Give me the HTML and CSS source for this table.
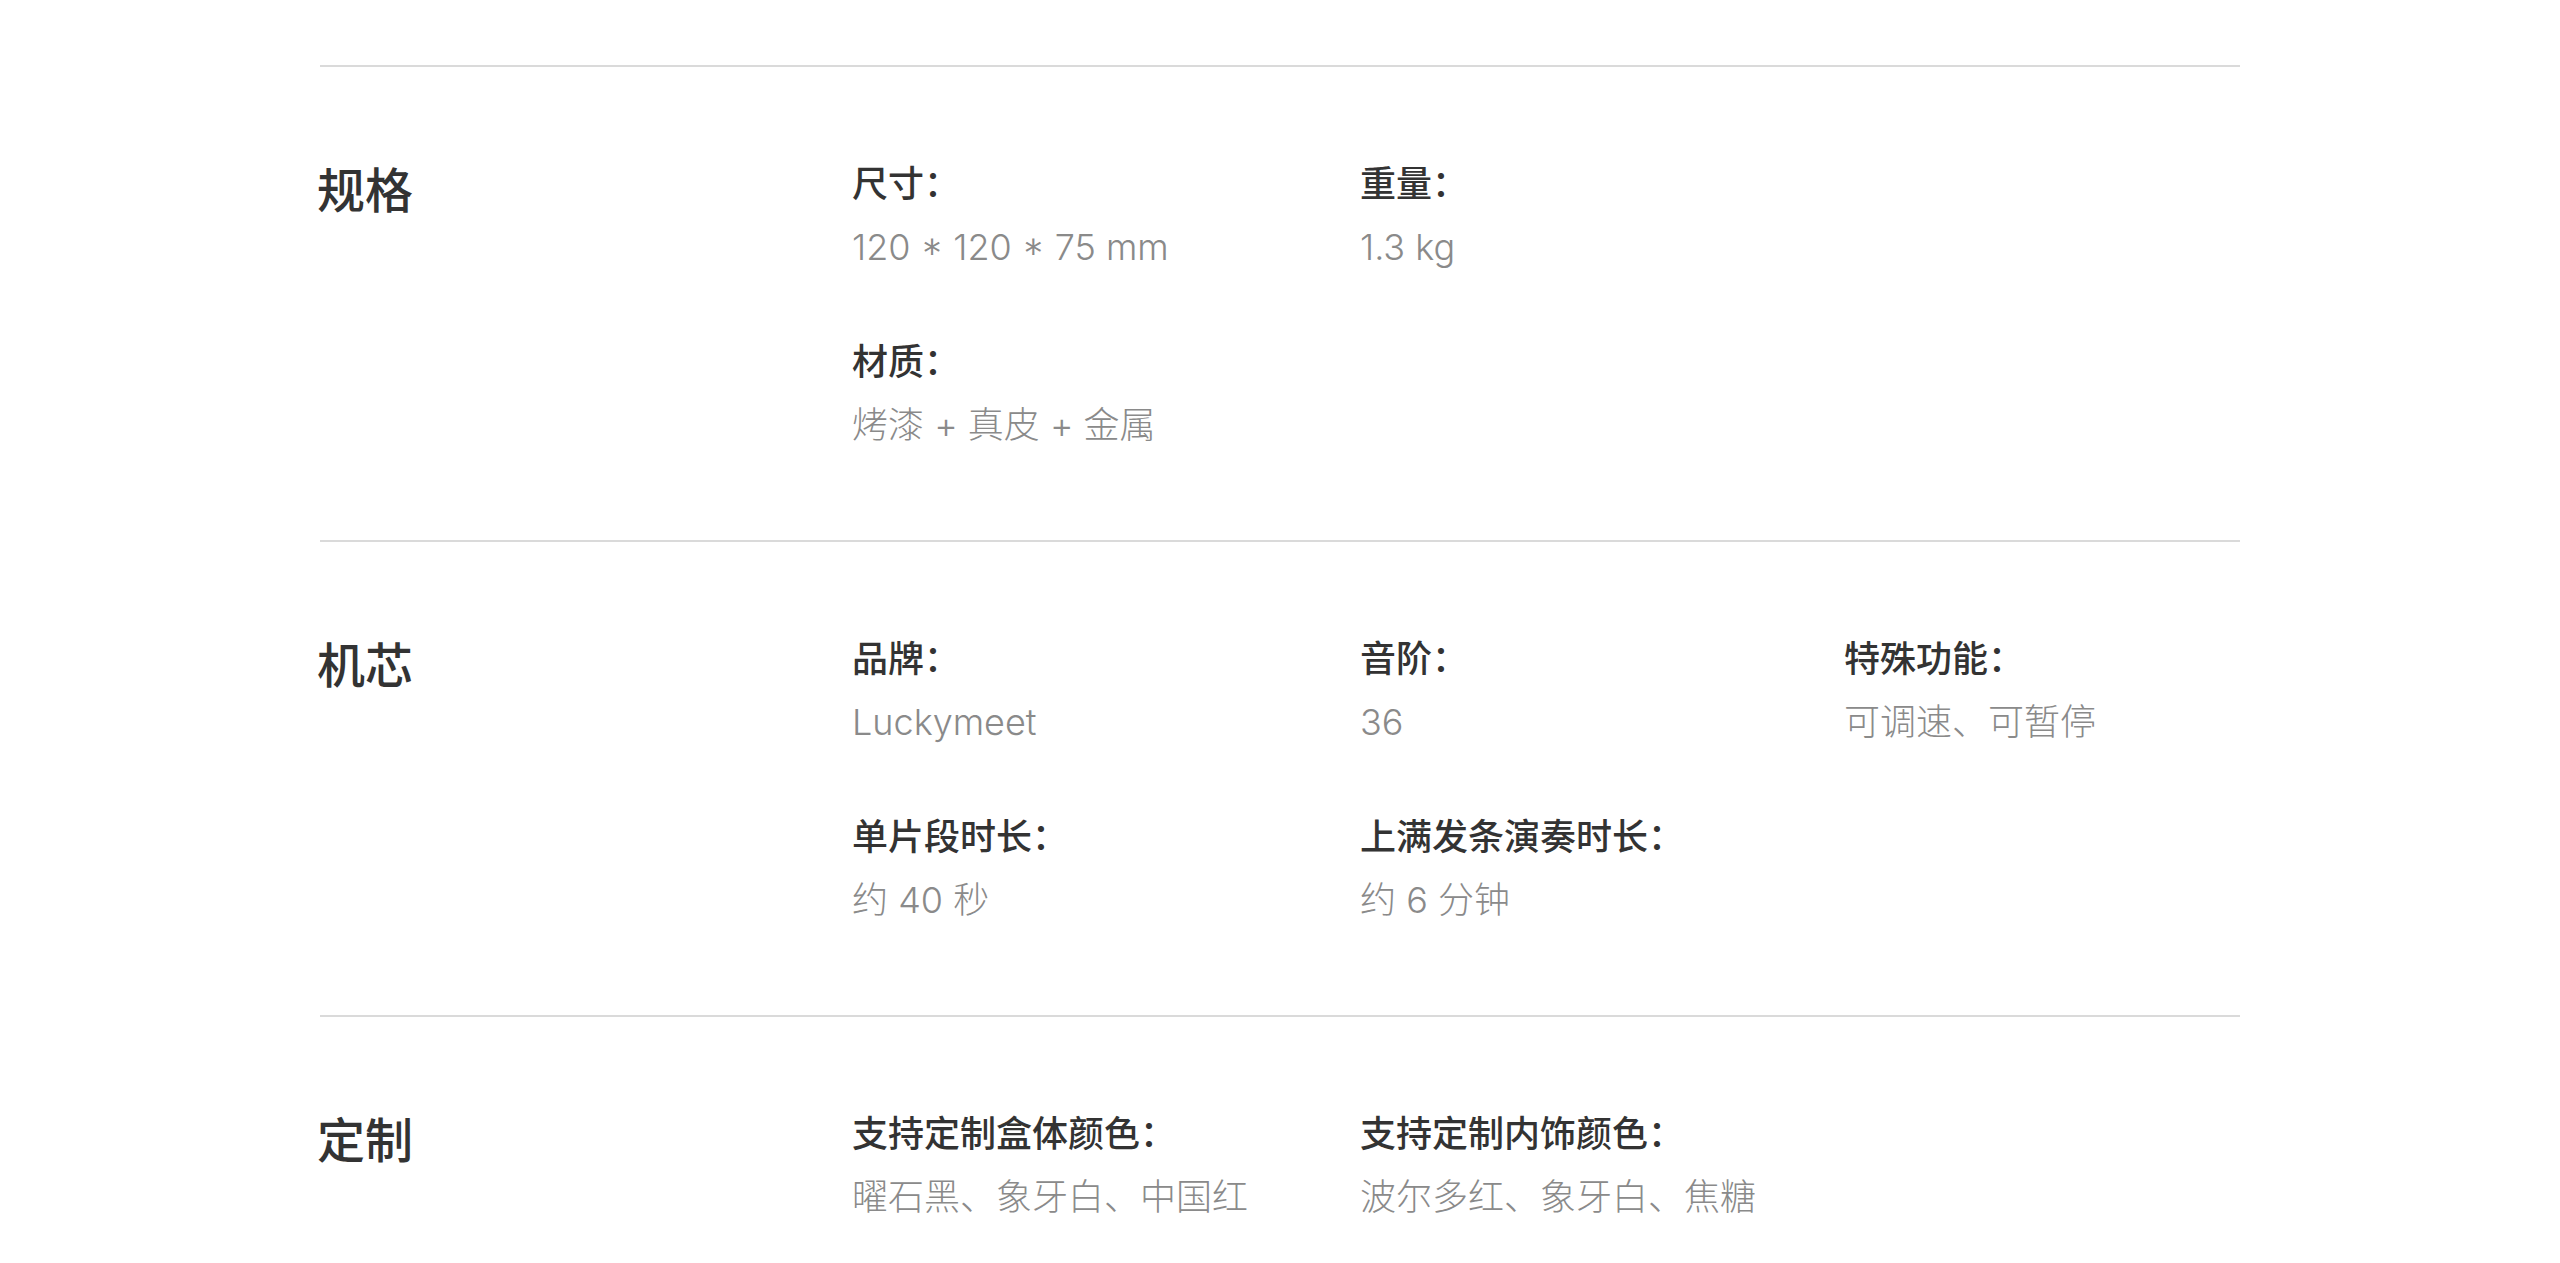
FILE: index.html
```html
<!DOCTYPE html>
<html lang="zh-CN">
<head>
    <meta charset="UTF-8">
    <meta name="viewport" content="width=device-width, initial-scale=1.0">
    <title>产品参数</title>
    <link rel="stylesheet" href="styles.css">
</head>
<body>
    <div class="specs">
        <section class="spec-section">
            <h2 class="spec-title">规格</h2>
            <div class="spec-list">
                <div class="spec-item">
                    <div class="spec-label">尺寸：</div>
                    <div class="spec-value">120 * 120 * 75 mm</div>
                </div>
                <div class="spec-item">
                    <div class="spec-label">重量：</div>
                    <div class="spec-value">1.3 kg</div>
                </div>
                <div class="spec-item spec-item-new-row">
                    <div class="spec-label">材质：</div>
                    <div class="spec-value">烤漆 + 真皮 + 金属</div>
                </div>
            </div>
        </section>

        <section class="spec-section">
            <h2 class="spec-title">机芯</h2>
            <div class="spec-list">
                <div class="spec-item">
                    <div class="spec-label">品牌：</div>
                    <div class="spec-value">Luckymeet</div>
                </div>
                <div class="spec-item">
                    <div class="spec-label">音阶：</div>
                    <div class="spec-value">36</div>
                </div>
                <div class="spec-item">
                    <div class="spec-label">特殊功能：</div>
                    <div class="spec-value">可调速、可暂停</div>
                </div>
                <div class="spec-item">
                    <div class="spec-label">单片段时长：</div>
                    <div class="spec-value">约 40 秒</div>
                </div>
                <div class="spec-item">
                    <div class="spec-label">上满发条演奏时长：</div>
                    <div class="spec-value">约 6 分钟</div>
                </div>
            </div>
        </section>

        <section class="spec-section">
            <h2 class="spec-title">定制</h2>
            <div class="spec-list">
                <div class="spec-item">
                    <div class="spec-label">支持定制盒体颜色：</div>
                    <div class="spec-value">曜石黑、象牙白、中国红</div>
                </div>
                <div class="spec-item">
                    <div class="spec-label">支持定制内饰颜色：</div>
                    <div class="spec-value">波尔多红、象牙白、焦糖</div>
                </div>
            </div>
        </section>
    </div>
</body>
</html>
```

FILE: styles.css
```css
body {
    margin: 0;
    padding: 65px 0 0;
    background-color: #fff;
    color: #333;
    font-family: Inter, "Noto Sans CJK SC", sans-serif;
}

.specs {
    width: 1920px;
    margin: 0 auto;
}

.spec-section {
    display: flex;
    border-top: 2px solid #dadada;
    padding: 87px 0 88px;
}

.spec-title {
    width: 535px;
    flex-shrink: 0;
    margin: -3px 0 0 -3px;
    font-family: "Noto Sans CJK SC", sans-serif;
    font-size: 48px;
    font-weight: 500;
    line-height: 72px;
    color: #333;
}

.spec-list {
    flex: 1;
    display: grid;
    grid-template-columns: 508px 484px 1fr;
    row-gap: 58px;
}

.spec-item-new-row {
    grid-column: 1;
}

.spec-label {
    font-family: "Noto Sans CJK SC", sans-serif;
    font-size: 36px;
    font-weight: 500;
    line-height: 54px;
    color: #333;
}

.spec-value {
    margin-top: 12px;
    font-size: 36px;
    font-weight: 300;
    line-height: 54px;
    color: #8a8a8a;
}
```
